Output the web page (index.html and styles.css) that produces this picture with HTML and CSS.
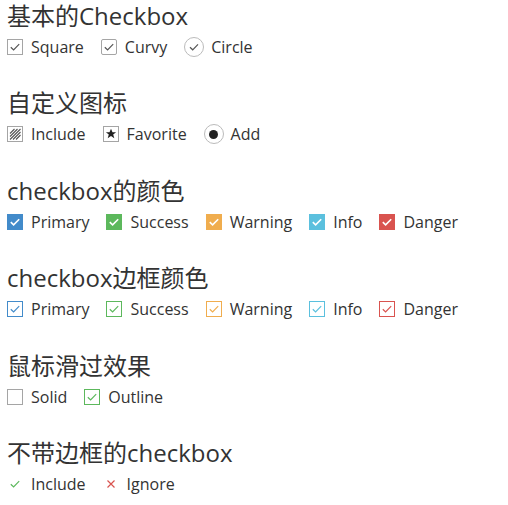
FILE: index.html
```html
<!DOCTYPE html>
<html lang="zh">
<head>
    <meta charset="UTF-8">
    <title>Checkbox</title>
    <link rel="stylesheet" href="styles.css">
</head>
<body>

<!-- 基本的Checkbox -->
<div class="section">
    <h3>基本的Checkbox</h3>
    <div class="row">
        <label class="item"><span class="box"><svg viewBox="0 0 14 14"><path d="M2.8 7.2l2.8 2.7L11.2 4.2"/></svg></span>Square</label>
        <label class="item"><span class="box curvy"><svg viewBox="0 0 14 14"><path d="M2.8 7.2l2.8 2.7L11.2 4.2"/></svg></span>Curvy</label>
        <label class="item"><span class="box round"><svg viewBox="0 0 14 14"><path d="M3 7.2l2.7 2.6L11 4.4"/></svg></span>Circle</label>
    </div>
</div>

<!-- 自定义图标 -->
<div class="section">
    <h3>自定义图标</h3>
    <div class="row">
        <label class="item"><span class="box"><svg viewBox="0 0 14 14"><path d="M2 6.5L6.5 2M2 9.5L9.5 2M2 12.5L12.5 2M5 12.5L12.5 5M8 12.5L12.5 8" class="hatch"/></svg></span>Include</label>
        <label class="item"><span class="box"><svg viewBox="0 0 14 14" class="fill"><path d="M7 1.8l1.5 3.4h3.6l-2.9 2.3 1.1 3.7L7 9l-3.3 2.2 1.1-3.7-2.9-2.3h3.6z"/></svg></span>Favorite</label>
        <label class="item"><span class="box round"><span class="dot"></span></span>Add</label>
    </div>
</div>

<!-- checkbox的颜色 -->
<div class="section">
    <h3>checkbox的颜色</h3>
    <div class="row">
        <label class="item"><span class="box solid primary"><svg viewBox="0 0 14 14"><path d="M2.8 7.2l2.8 2.7L11.2 4.2"/></svg></span>Primary</label>
        <label class="item"><span class="box solid success"><svg viewBox="0 0 14 14"><path d="M2.8 7.2l2.8 2.7L11.2 4.2"/></svg></span>Success</label>
        <label class="item"><span class="box solid warning"><svg viewBox="0 0 14 14"><path d="M2.8 7.2l2.8 2.7L11.2 4.2"/></svg></span>Warning</label>
        <label class="item"><span class="box solid info"><svg viewBox="0 0 14 14"><path d="M2.8 7.2l2.8 2.7L11.2 4.2"/></svg></span>Info</label>
        <label class="item"><span class="box solid danger"><svg viewBox="0 0 14 14"><path d="M2.8 7.2l2.8 2.7L11.2 4.2"/></svg></span>Danger</label>
    </div>
</div>

<!-- checkbox边框颜色 -->
<div class="section">
    <h3>checkbox边框颜色</h3>
    <div class="row">
        <label class="item"><span class="box line primary"><svg viewBox="0 0 14 14"><path d="M2.8 7.2l2.8 2.7L11.2 4.2"/></svg></span>Primary</label>
        <label class="item"><span class="box line success"><svg viewBox="0 0 14 14"><path d="M2.8 7.2l2.8 2.7L11.2 4.2"/></svg></span>Success</label>
        <label class="item"><span class="box line warning"><svg viewBox="0 0 14 14"><path d="M2.8 7.2l2.8 2.7L11.2 4.2"/></svg></span>Warning</label>
        <label class="item"><span class="box line info"><svg viewBox="0 0 14 14"><path d="M2.8 7.2l2.8 2.7L11.2 4.2"/></svg></span>Info</label>
        <label class="item"><span class="box line danger"><svg viewBox="0 0 14 14"><path d="M2.8 7.2l2.8 2.7L11.2 4.2"/></svg></span>Danger</label>
    </div>
</div>

<!-- 鼠标滑过效果 -->
<div class="section">
    <h3>鼠标滑过效果</h3>
    <div class="row">
        <label class="item"><span class="box"></span>Solid</label>
        <label class="item"><span class="box line success"><svg viewBox="0 0 14 14"><path d="M2.8 7.2l2.8 2.7L11.2 4.2"/></svg></span>Outline</label>
    </div>
</div>

<!-- 不带边框的checkbox -->
<div class="section">
    <h3>不带边框的checkbox</h3>
    <div class="row">
        <label class="item"><span class="box plain success"><svg viewBox="0 0 14 14"><path d="M2.8 7.2l2.8 2.7L11.2 4.2"/></svg></span>Include</label>
        <label class="item"><span class="box plain danger"><svg viewBox="0 0 14 14"><path d="M3.5 3.5l7 7M10.5 3.5l-7 7"/></svg></span>Ignore</label>
    </div>
</div>

</body>
</html>
```

FILE: styles.css
```css
body {
    margin: 0;
    padding: 0 7px;
    font-family: "Open Sans", "Noto Sans CJK SC", sans-serif;
    color: #333;
    background: #fff;
}
.section {
    height: 87.4px;
}
h3 {
    margin: 0;
    font-size: 24px;
    font-weight: normal;
    line-height: 31px;
}
.row {
    display: flex;
    align-items: center;
    gap: 17px;
    height: 26px;
    margin-top: 3px;
    font-size: 16px;
}
.item {
    display: flex;
    align-items: center;
    gap: 8px;
}
.box {
    box-sizing: border-box;
    width: 16px;
    height: 16px;
    border: 1px solid #a5a5a5;
    display: flex;
    align-items: center;
    justify-content: center;
    color: #555;
}
.box svg {
    width: 14px;
    height: 14px;
    fill: none;
    stroke: currentColor;
    stroke-width: 1.2;
}
.box svg.fill {
    fill: #222;
    stroke: none;
}
.box svg .hatch {
    stroke: #555;
    stroke-width: 1.1;
}
.curvy {
    border-radius: 2px;
}
.round {
    width: 20px;
    height: 20px;
    margin-right: -1px;
    border-radius: 50%;
    border-color: #bbb;
}
.dot {
    width: 9px;
    height: 9px;
    border-radius: 50%;
    background: #222;
}

.solid {
    color: #fff;
}
.solid svg {
    stroke-width: 1.6;
}
.solid.primary { background: #428bca; border-color: #428bca; }
.solid.success { background: #5cb85c; border-color: #5cb85c; }
.solid.warning { background: #f0ad4e; border-color: #f0ad4e; }
.solid.info { background: #5bc0de; border-color: #5bc0de; }
.solid.danger { background: #d9534f; border-color: #d9534f; }

.line.primary { border-color: #428bca; color: #428bca; }
.line.success { border-color: #5cb85c; color: #5cb85c; }
.line.warning { border-color: #f0ad4e; color: #f0ad4e; }
.line.info { border-color: #5bc0de; color: #5bc0de; }
.line.danger { border-color: #d9534f; color: #d9534f; }

.plain {
    border-color: transparent;
}
.plain.success { color: #5cb85c; }
.plain.danger { color: #d9534f; }
```
